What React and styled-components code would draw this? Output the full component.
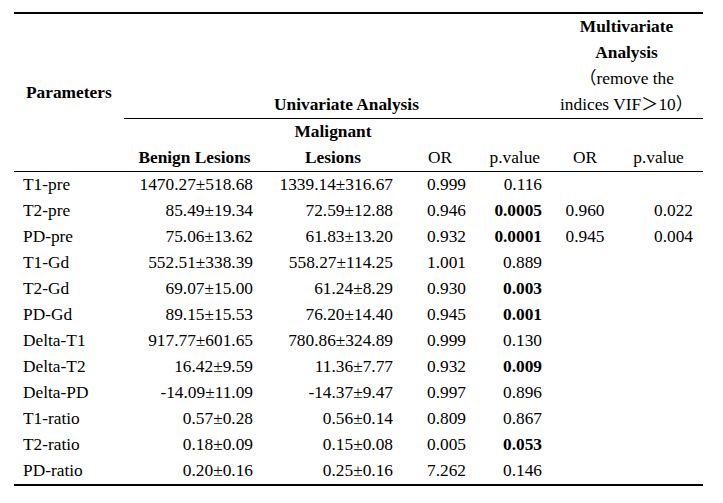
import React from "react";
import styled, {createGlobalStyle} from "styled-components";

const GlobalStyle = createGlobalStyle`
  html, body {
    margin: 0;
    padding: 0;
    background: #fff;
  }
  body {
    font-family: "Liberation Serif", "Times New Roman", "Noto Sans CJK SC", serif;
    color: #000;
  }
`

const Page = styled.div`
  padding: 12px 20px 0 14px;
`

const Table = styled.table`
  width: 689px;
  table-layout: fixed;
  border-collapse: separate;
  border-spacing: 0;
  border-top: 2px solid #000;
  border-bottom: 2px solid #000;
  font-size: 17.33px;
  line-height: 26px;
`

const HeadCell = styled.th`
  padding: 0;
  padding-left: ${p => p.$pl || 0}px;
  padding-right: ${p => p.$pr || 0}px;
  font-weight: ${p => (p.$light ? "normal" : "bold")};
  text-align: ${p => p.$align || "center"};
  vertical-align: ${p => p.$valign || "bottom"};
  white-space: nowrap;
  border-bottom: ${p => (p.$line ? "1px solid #000" : "none")};
`

const Light = styled.span`
  font-weight: normal;
`

const Row = styled.tr`
  height: 26px;
`

const Cell = styled.td`
  padding: 0;
  padding-left: ${p => p.$pl || 0}px;
  padding-right: ${p => p.$pr || 0}px;
  text-align: ${p => p.$align || "left"};
  font-weight: ${p => (p.$bold ? "bold" : "normal")};
  white-space: nowrap;
  vertical-align: middle;
`

const rows = [
    ["T1-pre", "1470.27±518.68", "1339.14±316.67", "0.999", "0.116", false, "", ""],
    ["T2-pre", "85.49±19.34", "72.59±12.88", "0.946", "0.0005", true, "0.960", "0.022"],
    ["PD-pre", "75.06±13.62", "61.83±13.20", "0.932", "0.0001", true, "0.945", "0.004"],
    ["T1-Gd", "552.51±338.39", "558.27±114.25", "1.001", "0.889", false, "", ""],
    ["T2-Gd", "69.07±15.00", "61.24±8.29", "0.930", "0.003", true, "", ""],
    ["PD-Gd", "89.15±15.53", "76.20±14.40", "0.945", "0.001", true, "", ""],
    ["Delta-T1", "917.77±601.65", "780.86±324.89", "0.999", "0.130", false, "", ""],
    ["Delta-T2", "16.42±9.59", "11.36±7.77", "0.932", "0.009", true, "", ""],
    ["Delta-PD", "-14.09±11.09", "-14.37±9.47", "0.997", "0.896", false, "", ""],
    ["T1-ratio", "0.57±0.28", "0.56±0.14", "0.809", "0.867", false, "", ""],
    ["T2-ratio", "0.18±0.09", "0.15±0.08", "0.005", "0.053", true, "", ""],
    ["PD-ratio", "0.20±0.16", "0.25±0.16", "7.262", "0.146", false, "", ""],
];

function App() {
    return (
        <Page>
            <GlobalStyle />
            <Table>
                <colgroup>
                    <col style={{width: 110}} />
                    <col style={{width: 141}} />
                    <col style={{width: 136}} />
                    <col style={{width: 69}} />
                    <col style={{width: 80}} />
                    <col style={{width: 70}} />
                    <col style={{width: 83}} />
                </colgroup>
                <thead>
                    <tr style={{height: 104}}>
                        <HeadCell rowSpan={2} $align="left" $valign="middle" $pl={12} $line>Parameters</HeadCell>
                        <HeadCell colSpan={4} $align="left" $pl={150} $line>Univariate Analysis</HeadCell>
                        <HeadCell colSpan={2} $line>
                            Multivariate<br />
                            Analysis<br />
                            <Light>（remove the</Light><br />
                            <Light>indices VIF＞10）</Light>
                        </HeadCell>
                    </tr>
                    <tr style={{height: 53}}>
                        <HeadCell $line>Benign Lesions</HeadCell>
                        <HeadCell $line>Malignant<br />Lesions</HeadCell>
                        <HeadCell $light $align="left" $pl={27} $line>OR</HeadCell>
                        <HeadCell $light $align="right" $pr={10} $line>p.value</HeadCell>
                        <HeadCell $light $line>OR</HeadCell>
                        <HeadCell $light $line $pr={6}>p.value</HeadCell>
                    </tr>
                </thead>
                <tbody>
                    {rows.map(r => (
                        <Row key={r[0]}>
                            <Cell $pl={9}>{r[0]}</Cell>
                            <Cell $align="right" $pr={12}>{r[1]}</Cell>
                            <Cell $align="right" $pr={8}>{r[2]}</Cell>
                            <Cell $pl={26}>{r[3]}</Cell>
                            <Cell $align="right" $pr={8} $bold={r[5]}>{r[4]}</Cell>
                            <Cell $align="center">{r[6]}</Cell>
                            <Cell $align="right" $pr={10}>{r[7]}</Cell>
                        </Row>
                    ))}
                </tbody>
            </Table>
        </Page>
    );
}

export default App;
